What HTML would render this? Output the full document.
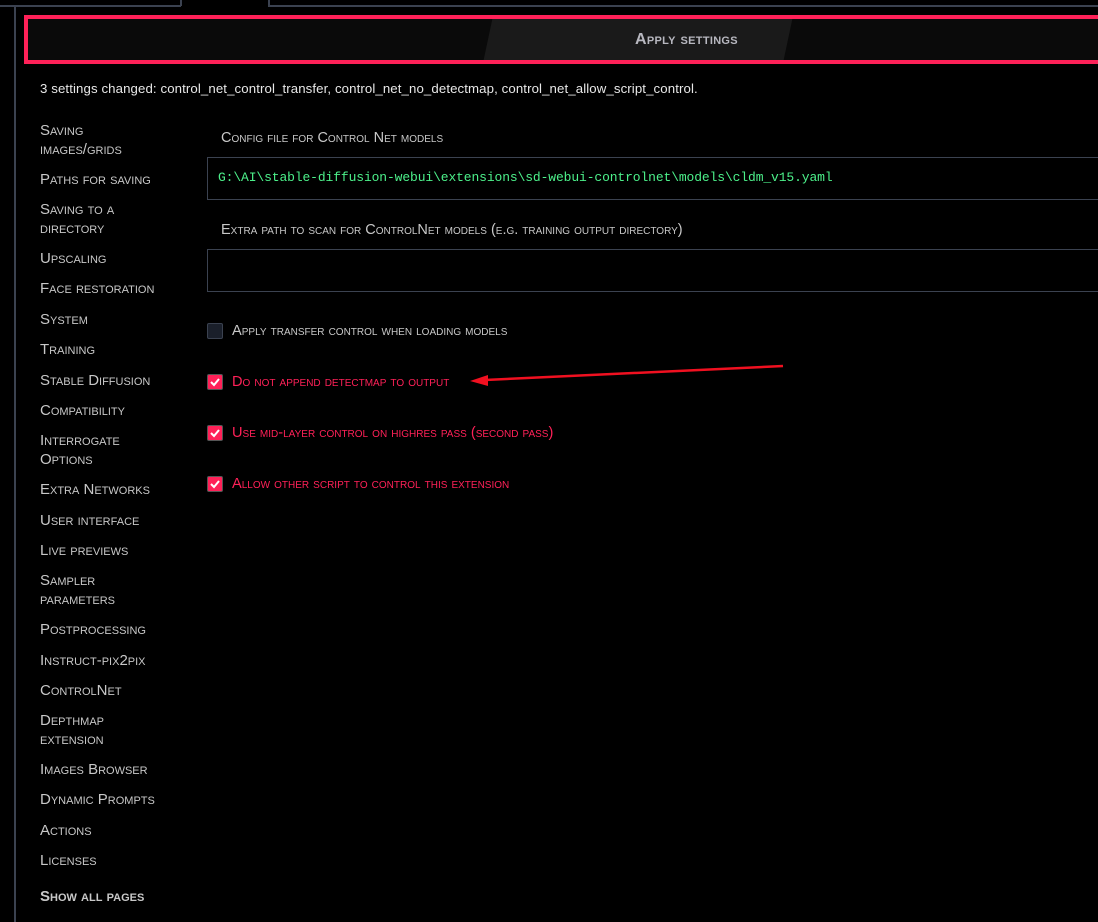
<!DOCTYPE html>
<html><head><style>
body{margin:0;width:1098px;height:922px;background:#000;overflow:hidden;position:relative;font-family:"Liberation Sans",sans-serif;color:#d0d0d0}
.sc{font-variant:small-caps}
.ln{position:absolute;background:#3b4250}
.btn{position:absolute;left:24px;top:15px;width:1080px;height:41px;border:4px solid #ff2158;background:#0a0a0a;overflow:hidden}
.btn span{position:absolute;left:607px;top:12px;font-size:16px;font-weight:bold;color:#b8b8c0;letter-spacing:0.3px}
.sb{position:absolute;left:40px;font-size:15px;line-height:19px;color:#c8c8c8;width:138px}
.lbl{position:absolute;left:221px;font-size:14.5px;color:#c8c8c8}
.box{position:absolute;left:207px;width:900px;border:1px solid #3b4250;background:#000}
.cb{position:absolute;left:207px;width:14px;height:14px;border:1px solid #555;background:#ff2158;border-radius:2px}
.cb svg{position:absolute;left:2px;top:2px}
.ct{position:absolute;left:232px;font-size:14.6px;color:#ff2158}
</style></head><body>
<div class="ln" style="left:0;top:5px;width:181px;height:2px"></div>
<div class="ln" style="left:180px;top:0;width:2px;height:6px"></div>
<div class="ln" style="left:268px;top:0;width:2px;height:6px"></div>
<div class="ln" style="left:268px;top:5px;width:830px;height:2px"></div>
<div class="ln" style="left:14px;top:5px;width:2px;height:917px"></div>
<div class="btn"><div style="position:absolute;left:460px;top:0;width:300px;height:41px;background:#1a1a1a;transform:skewX(-12deg)"></div><span class="sc">Apply settings</span></div>
<div style="position:absolute;left:40px;top:81px;font-size:13px;color:#e8e8e8;letter-spacing:0.1px;transform:scaleX(1.018);transform-origin:left">3 settings changed: control_net_control_transfer, control_net_no_detectmap, control_net_allow_script_control.</div>
<div class="sc">
<div class="sb" style="top:121px">Saving<br>images/grids</div>
<div class="sb" style="top:170px">Paths for saving</div>
<div class="sb" style="top:200px">Saving to a<br>directory</div>
<div class="sb" style="top:249px">Upscaling</div>
<div class="sb" style="top:279px">Face restoration</div>
<div class="sb" style="top:310px">System</div>
<div class="sb" style="top:340px">Training</div>
<div class="sb" style="top:371px">Stable Diffusion</div>
<div class="sb" style="top:401px">Compatibility</div>
<div class="sb" style="top:431px">Interrogate<br>Options</div>
<div class="sb" style="top:480px">Extra Networks</div>
<div class="sb" style="top:511px">User interface</div>
<div class="sb" style="top:541px">Live previews</div>
<div class="sb" style="top:571px">Sampler<br>parameters</div>
<div class="sb" style="top:620px">Postprocessing</div>
<div class="sb" style="top:651px">Instruct-pix2pix</div>
<div class="sb" style="top:681px">ControlNet</div>
<div class="sb" style="top:711px">Depthmap<br>extension</div>
<div class="sb" style="top:760px">Images Browser</div>
<div class="sb" style="top:790px">Dynamic Prompts</div>
<div class="sb" style="top:821px">Actions</div>
<div class="sb" style="top:851px">Licenses</div>
<div class="sb" style="top:887px;font-weight:bold">Show all pages</div>
<div class="lbl" style="top:130px">Config file for Control Net models</div>
<div class="lbl" style="top:222px">Extra path to scan for ControlNet models (e.g. training output directory)</div>
<div class="box" style="top:157px;height:41px"><span style="position:absolute;left:10px;top:12px;font-family:'Liberation Mono',monospace;font-size:13px;letter-spacing:-0.12px;color:#4cf08a;font-variant:normal">G:\AI\stable-diffusion-webui\extensions\sd-webui-controlnet\models\cldm_v15.yaml</span></div>
<div class="box" style="top:249px;height:41px"></div>
<div class="cb" style="top:323px;background:#1a1f2a;border-color:#3b4250"></div>
<div class="ct" style="top:323px;color:#c8c8c8">Apply transfer control when loading models</div>
<div class="cb" style="top:374px"><svg width="10" height="10"><path d="M1 5l3 3 5-6" stroke="#fff" stroke-width="2" fill="none"/></svg></div>
<div class="ct" style="top:374px">Do not append detectmap to output</div>
<div class="cb" style="top:425px"><svg width="10" height="10"><path d="M1 5l3 3 5-6" stroke="#fff" stroke-width="2" fill="none"/></svg></div>
<div class="ct" style="top:425px">Use mid-layer control on highres pass (second pass)</div>
<div class="cb" style="top:476px"><svg width="10" height="10"><path d="M1 5l3 3 5-6" stroke="#fff" stroke-width="2" fill="none"/></svg></div>
<div class="ct" style="top:476px">Allow other script to control this extension</div>
</div>
<svg style="position:absolute;left:0;top:0" width="1098" height="922"><path d="M783 366L485 380" stroke="#f01020" stroke-width="2.5"/><path d="M470 381l18-6v11z" fill="#f01020"/></svg>
</body></html>
